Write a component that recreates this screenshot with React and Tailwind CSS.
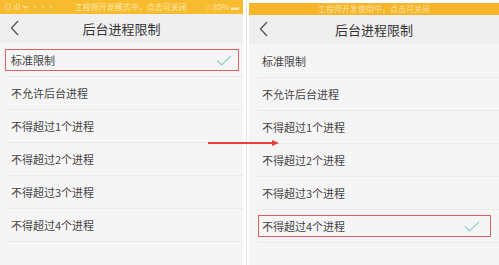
import React from "react";

const items = ["标准限制", "不允许后台进程", "不得超过1个进程", "不得超过2个进程", "不得超过3个进程", "不得超过4个进程"];

const Check = () => (
  <svg width="16" height="11" viewBox="0 0 16 11" fill="none">
    <path d="M1 5.5 L5.5 10 L15 1" stroke="#8fd3c8" strokeWidth="1.2" />
  </svg>
);

const Back = () => (
  <svg width="9" height="16" viewBox="0 0 9 16" fill="none">
    <path d="M8 1 L1.5 8 L8 15" stroke="#555" strokeWidth="1.3" />
  </svg>
);

const Phone = ({ selected, status, full, boxClass, textClass }) => (
  <div className="flex flex-col h-full bg-[#f5f5f5]">
    {full ? (
      <div className="h-[14px] bg-[#f7bb2f] flex items-center justify-between px-[4px] text-[8px] text-[#fde9b0]">
        <span>⊙ ıll ᯤ ···</span>
        <span>{status}</span>
        <span>⌂ 85% ▬</span>
      </div>
    ) : (
      <div className="pt-[3px] bg-white">
        <div className="h-[12px] bg-[#f7b52a] flex items-center justify-center text-[8px] text-[#fde3a8]">{status}</div>
      </div>
    )}
    <div className="h-[29px] bg-[#efefef] flex items-center relative">
      <div className="absolute left-[10px] top-[6px]">
        <Back />
      </div>
      <div className="flex-1 text-center text-[13px] text-[#333]">后台进程限制</div>
    </div>
    <div className="pt-[1px] flex flex-col">
      {items.map((t, i) => (
        <div key={t} className="h-[33px] relative flex items-center border-b border-[#e9e9e9] ml-[8px]">
          <span className={`text-[11px] text-[#444] ${textClass}`}>{t}</span>
          {i === selected && (
            <div className={`absolute top-[5px] bottom-[5px] border border-[#d9625f] flex items-center justify-end pr-[6px] ${boxClass}`}>
              <Check />
            </div>
          )}
        </div>
      ))}
    </div>
  </div>
);

export default function App() {
  return (
    <div className="w-[499px] h-[265px] bg-white flex relative overflow-hidden" style={{ fontFamily: '"Noto Sans CJK SC", "Noto Sans", sans-serif' }}>
      <div className="w-[243px] h-full">
        <Phone selected={0} status="工程师开发模式中，点击可关闭" full boxClass="left-[-3px] right-[4px]" textClass="ml-[3px]" />
      </div>
      <div className="w-[3px] h-full bg-white" />
      <div className="w-[1px] h-full bg-[#e4e4e4]" />
      <div className="w-[2px] h-full bg-white" />
      <div className="flex-1 h-full">
        <Phone selected={5} status="工程师开发使用中，点击可关闭" boxClass="left-[1px] right-[8px] pr-[10px]" textClass="ml-[5px]" />
      </div>
      <div className="absolute left-[208px] top-[142px] w-[66px] h-[1.5px] bg-[#e8403a]" />
      <div className="absolute left-[272px] top-[139.5px] w-0 h-0 border-y-[3.5px] border-y-transparent border-l-[7px] border-l-[#e8403a]" />
    </div>
  );
}
